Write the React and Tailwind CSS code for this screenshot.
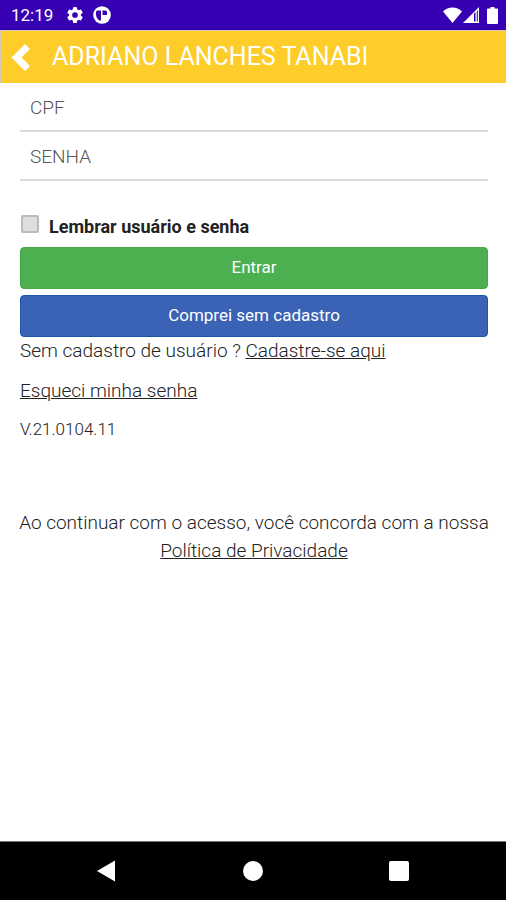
import { useState } from "react";

function StatusBar() {
  return (
    <div className="flex h-[30px] shrink-0 items-center justify-between bg-[#3700b3] pl-[11px] pr-2 text-white">
      <div className="flex items-center">
        <span className="text-[17px] leading-5">12:19</span>
        <svg viewBox="0 0 24 24" className="ml-3 size-5" fill="currentColor">
          <path
            fillRule="evenodd"
            d="M19.1 12.9a7 7 0 0 0 0-1.8l2-1.6a.5.5 0 0 0 .1-.6l-1.9-3.3a.5.5 0 0 0-.6-.2l-2.4 1a7 7 0 0 0-1.6-1l-.4-2.5a.5.5 0 0 0-.5-.4h-3.6a.5.5 0 0 0-.5.4l-.4 2.5a7 7 0 0 0-1.6 1l-2.4-1a.5.5 0 0 0-.6.2L2.8 8.9a.5.5 0 0 0 .1.6l2 1.6a7 7 0 0 0 0 1.8l-2 1.6a.5.5 0 0 0-.1.6l1.9 3.3c.1.2.4.3.6.2l2.4-1a7 7 0 0 0 1.6 1l.4 2.5c0 .2.2.4.5.4h3.6c.2 0 .5-.2.5-.4l.4-2.5a7 7 0 0 0 1.6-1l2.4 1c.2.1.5 0 .6-.2l1.9-3.3a.5.5 0 0 0-.1-.6zM12 15.4a3.4 3.4 0 1 1 0-6.8 3.4 3.4 0 0 1 0 6.8z"
          />
        </svg>
        <svg viewBox="0 0 18 18" className="ml-2 size-[18px]">
          <circle cx="9" cy="9" r="8.8" fill="currentColor" />
          <path d="M4 4.500H8V14.500H6.500C4.500 13.500 3 11 3 8.500V5.500z" fill="#3700b3" />
          <path d="M9.500 4.500H12.500A1.500 1.500 0 0 1 14 6V9H9.500z" fill="#3700b3" />
        </svg>
      </div>
      <div className="flex items-center">
        <svg viewBox="0 0 19 16" className="h-4 w-[19px]" fill="currentColor">
          <path d="M0 4.5C2.5 2 6 .5 9.5.5s7 1.5 9.5 4L9.5 16z" />
        </svg>
        <svg viewBox="0 0 16 16" className="ml-px size-4">
          <path d="M16 0V16H0z" fill="currentColor" />
          <path d="M11 6.5L12.500 5V14.500H11z" fill="#3700b3" />
          <path d="M13.800 4V14.500H14.800V3z" fill="#3700b3" />
        </svg>
        <svg viewBox="0 0 11 17" className="ml-2 h-[17px] w-[11px]" fill="currentColor">
          <path d="M3.500 0h4v1.500H10a1 1 0 0 1 1 1V16a1 1 0 0 1-1 1H1a1 1 0 0 1-1-1V2.500a1 1 0 0 1 1-1h2.500z" />
        </svg>
      </div>
    </div>
  );
}

function Header({ title }) {
  return (
    <header className="flex h-[53px] shrink-0 items-center border-l-2 border-t border-[#d3c9b5] bg-[#fecd29] pl-[9px] text-white">
      <button type="button" aria-label="Voltar">
        <svg viewBox="0 0 19 27" className="h-[27px] w-[19px]" fill="currentColor">
          <path d="M14 0L19 5L10.5 13.5L19 22L14 27L.5 13.5z" />
        </svg>
      </button>
      <h1 className="ml-[22px] text-[25px]">{title}</h1>
    </header>
  );
}

function Field({ id, label, ...props }) {
  return (
    <input
      id={id}
      name={id}
      aria-label={label}
      placeholder={label}
      className="h-[49px] w-full border-b-2 border-[#dadada] px-2.5 pt-0.5 text-[19px] font-light text-[#333] outline-none placeholder:text-[#555]"
      {...props}
    />
  );
}

function NavBar() {
  return (
    <nav className="flex h-[59px] shrink-0 items-center justify-center gap-[126px] border-t border-[#777] bg-black text-white">
      <button type="button" aria-label="Voltar">
        <svg viewBox="0 0 20 22" className="h-[22px] w-5" fill="currentColor">
          <path d="M18 .5V21.5L0 11z" />
        </svg>
      </button>
      <button type="button" aria-label="Início" className="size-5 rounded-full bg-white" />
      <button type="button" aria-label="Recentes" className="size-5 rounded-xs bg-white" />
    </nav>
  );
}

export default function App() {
  const [cpf, setCpf] = useState("");
  const [senha, setSenha] = useState("");
  const [lembrar, setLembrar] = useState(false);

  return (
    <div className="flex min-h-screen flex-col bg-white font-['Roboto',sans-serif] text-[#222]">
      <StatusBar />
      <Header title="ADRIANO LANCHES TANABI" />

      <main className="grow pl-5 pr-[18px] text-[19px] font-light leading-7">
        <form onSubmit={(e) => e.preventDefault()}>
          <Field
            id="cpf"
            label="CPF"
            type="text"
            value={cpf}
            onChange={(e) => setCpf(e.target.value)}
          />
          <Field
            id="senha"
            label="SENHA"
            type="password"
            value={senha}
            onChange={(e) => setSenha(e.target.value)}
          />

          <div className="mt-8 flex items-center">
            <input
              id="lembrar"
              type="checkbox"
              checked={lembrar}
              onChange={(e) => setLembrar(e.target.checked)}
              className="mb-1.5 ml-px size-[18px] appearance-none rounded-xs border-2 border-[#bbb] bg-[#dedede] checked:bg-[#3b63b5]"
            />
            <label htmlFor="lembrar" className="ml-2.5 text-lg font-bold">
              Lembrar usuário e senha
            </label>
          </div>

          <button
            type="submit"
            className="mt-1.5 block h-[42px] w-full rounded-sm border border-[#45a94a] bg-[#4caf50] pb-0.5 text-[17px] font-normal text-white"
          >
            Entrar
          </button>
          <button
            type="button"
            className="mt-1.5 block h-[42px] w-full rounded-sm border border-[#1f55ad] bg-[#3b63b5] pb-0.5 text-[17px] font-normal text-white"
          >
            Comprei sem cadastro
          </button>
        </form>

        <p>
          Sem cadastro de usuário ?{" "}
          <a href="#cadastro" className="underline">
            Cadastre-se aqui
          </a>
        </p>
        <p className="mt-3">
          <a href="#senha" className="underline">
            Esqueci minha senha
          </a>
        </p>
        <p className="mt-2.5 text-[17px]">V.21.0104.11</p>

        <p className="-mx-2 mt-[66px] text-center">
          Ao continuar com o acesso, você concorda com a nossa{" "}
          <a href="#privacidade" className="underline">
            Política de Privacidade
          </a>
        </p>
      </main>

      <NavBar />
    </div>
  );
}
